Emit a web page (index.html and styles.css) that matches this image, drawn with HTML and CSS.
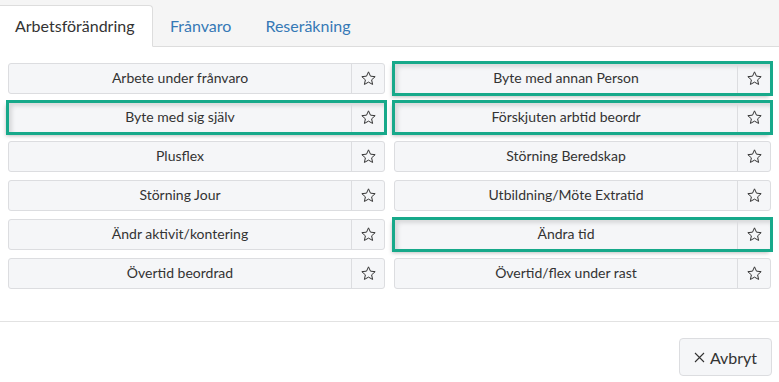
FILE: index.html
```html
<html lang="sv">
<head>
    <meta charset="UTF-8">
    <title>Arbetsförändring</title>
    <link rel="stylesheet" href="styles.css">
</head>
<body>
<div id="tabs">
    <a class="tab active" href="javascript:;">Arbetsförändring</a>
    <a class="tab" href="javascript:;">Frånvaro</a>
    <a class="tab" href="javascript:;">Reseräkning</a>
</div>
<div id="grid">
    <div class="item"><span class="name">Arbete under frånvaro</span><span class="fav"></span></div>
    <div class="item marked"><span class="name">Byte med annan Person</span><span class="fav"></span></div>
    <div class="item marked"><span class="name">Byte med sig själv</span><span class="fav"></span></div>
    <div class="item marked"><span class="name">Förskjuten arbtid beordr</span><span class="fav"></span></div>
    <div class="item"><span class="name">Plusflex</span><span class="fav"></span></div>
    <div class="item"><span class="name">Störning Beredskap</span><span class="fav"></span></div>
    <div class="item"><span class="name">Störning Jour</span><span class="fav"></span></div>
    <div class="item"><span class="name">Utbildning/Möte Extratid</span><span class="fav"></span></div>
    <div class="item"><span class="name">Ändr aktivit/kontering</span><span class="fav"></span></div>
    <div class="item marked"><span class="name">Ändra tid</span><span class="fav"></span></div>
    <div class="item"><span class="name">Övertid beordrad</span><span class="fav"></span></div>
    <div class="item"><span class="name">Övertid/flex under rast</span><span class="fav"></span></div>
</div>
<div id="footer">
    <a id="cancel" href="javascript:;"><svg width="11" height="11" viewBox="0 0 11 11"><path d="M1 1L10 10M10 1L1 10" stroke="#333" stroke-width="1.1"/></svg>Avbryt</a>
</div>
<script type="text/javascript">
    // fyll stjärnorna
    var star='<svg width="17" height="17" viewBox="0 0 24 24"><path d="M12 2.6l2.8 6.1 6.6.7-5 4.5 1.4 6.5L12 17.1l-5.8 3.3 1.4-6.5-5-4.5 6.6-.7z" fill="none" stroke="#333" stroke-width="1.4" stroke-linejoin="round"/></svg>';
    var favs=document.getElementsByClassName("fav");
    for(var i=0;i<favs.length;i++){
        favs[i].innerHTML=star;
    }
</script>
</body>
</html>
```

FILE: styles.css
```css
*{
    padding:0px;
    margin:0px;
    box-sizing:border-box;
}
body{
    font-family:Lato,"Liberation Sans",sans-serif;
    font-size:14px;
    color:#333;
    background:#fff;
}
a{
    text-decoration:none;
}
#tabs{
    display:flex;
    height:47px;
    padding-top:5px;
    background:#f5f5f5;
    border-bottom:1px solid #ddd;
}
#tabs .tab{
    display:block;
    height:42px;
    padding:0 16px;
    line-height:40px;
    font-size:16px;
    color:#3579b6;
    border:1px solid transparent;
}
#tabs .tab.active{
    width:153px;
    padding:0 15px;
    color:#333;
    background:#fff;
    border-color:#ddd;
    border-bottom-color:#fff;
    border-left:none;
    border-radius:0 4px 0 0;
}
#grid{
    display:grid;
    grid-template-columns:1fr 1fr;
    column-gap:9px;
    row-gap:8px;
    padding:16px 8px 0 8px;
}
#grid .item{
    display:flex;
    height:31px;
    background:#f5f6f8;
    border:1px solid #dcdde0;
    border-radius:3px;
}
#grid .item .name{
    flex:1;
    text-align:center;
    line-height:28px;
}
#grid .item .fav{
    width:33px;
    display:flex;
    align-items:center;
    justify-content:center;
    border-left:1px solid #dcdde0;
}
#grid .item .fav svg{
    display:block;
}
#grid .item.marked{
    border-radius:0;
    outline:3px solid #17a98a;
    outline-offset:-1px;
    box-shadow:-2px 3px 4px rgba(0,0,0,0.25),inset 3px 3px 4px rgba(0,0,0,0.12);
}
#footer{
    margin-top:32px;
    border-top:1px solid #e2e2e2;
    display:flex;
    justify-content:flex-end;
    padding:16px 7px 0 0;
}
#cancel{
    display:flex;
    align-items:center;
    justify-content:center;
    gap:5px;
    width:93px;
    height:38px;
    font-size:16px;
    color:#333;
    background:#f5f6f8;
    border:1px solid #dcdde0;
    border-radius:4px;
}
#cancel svg{
    display:block;
}
```
